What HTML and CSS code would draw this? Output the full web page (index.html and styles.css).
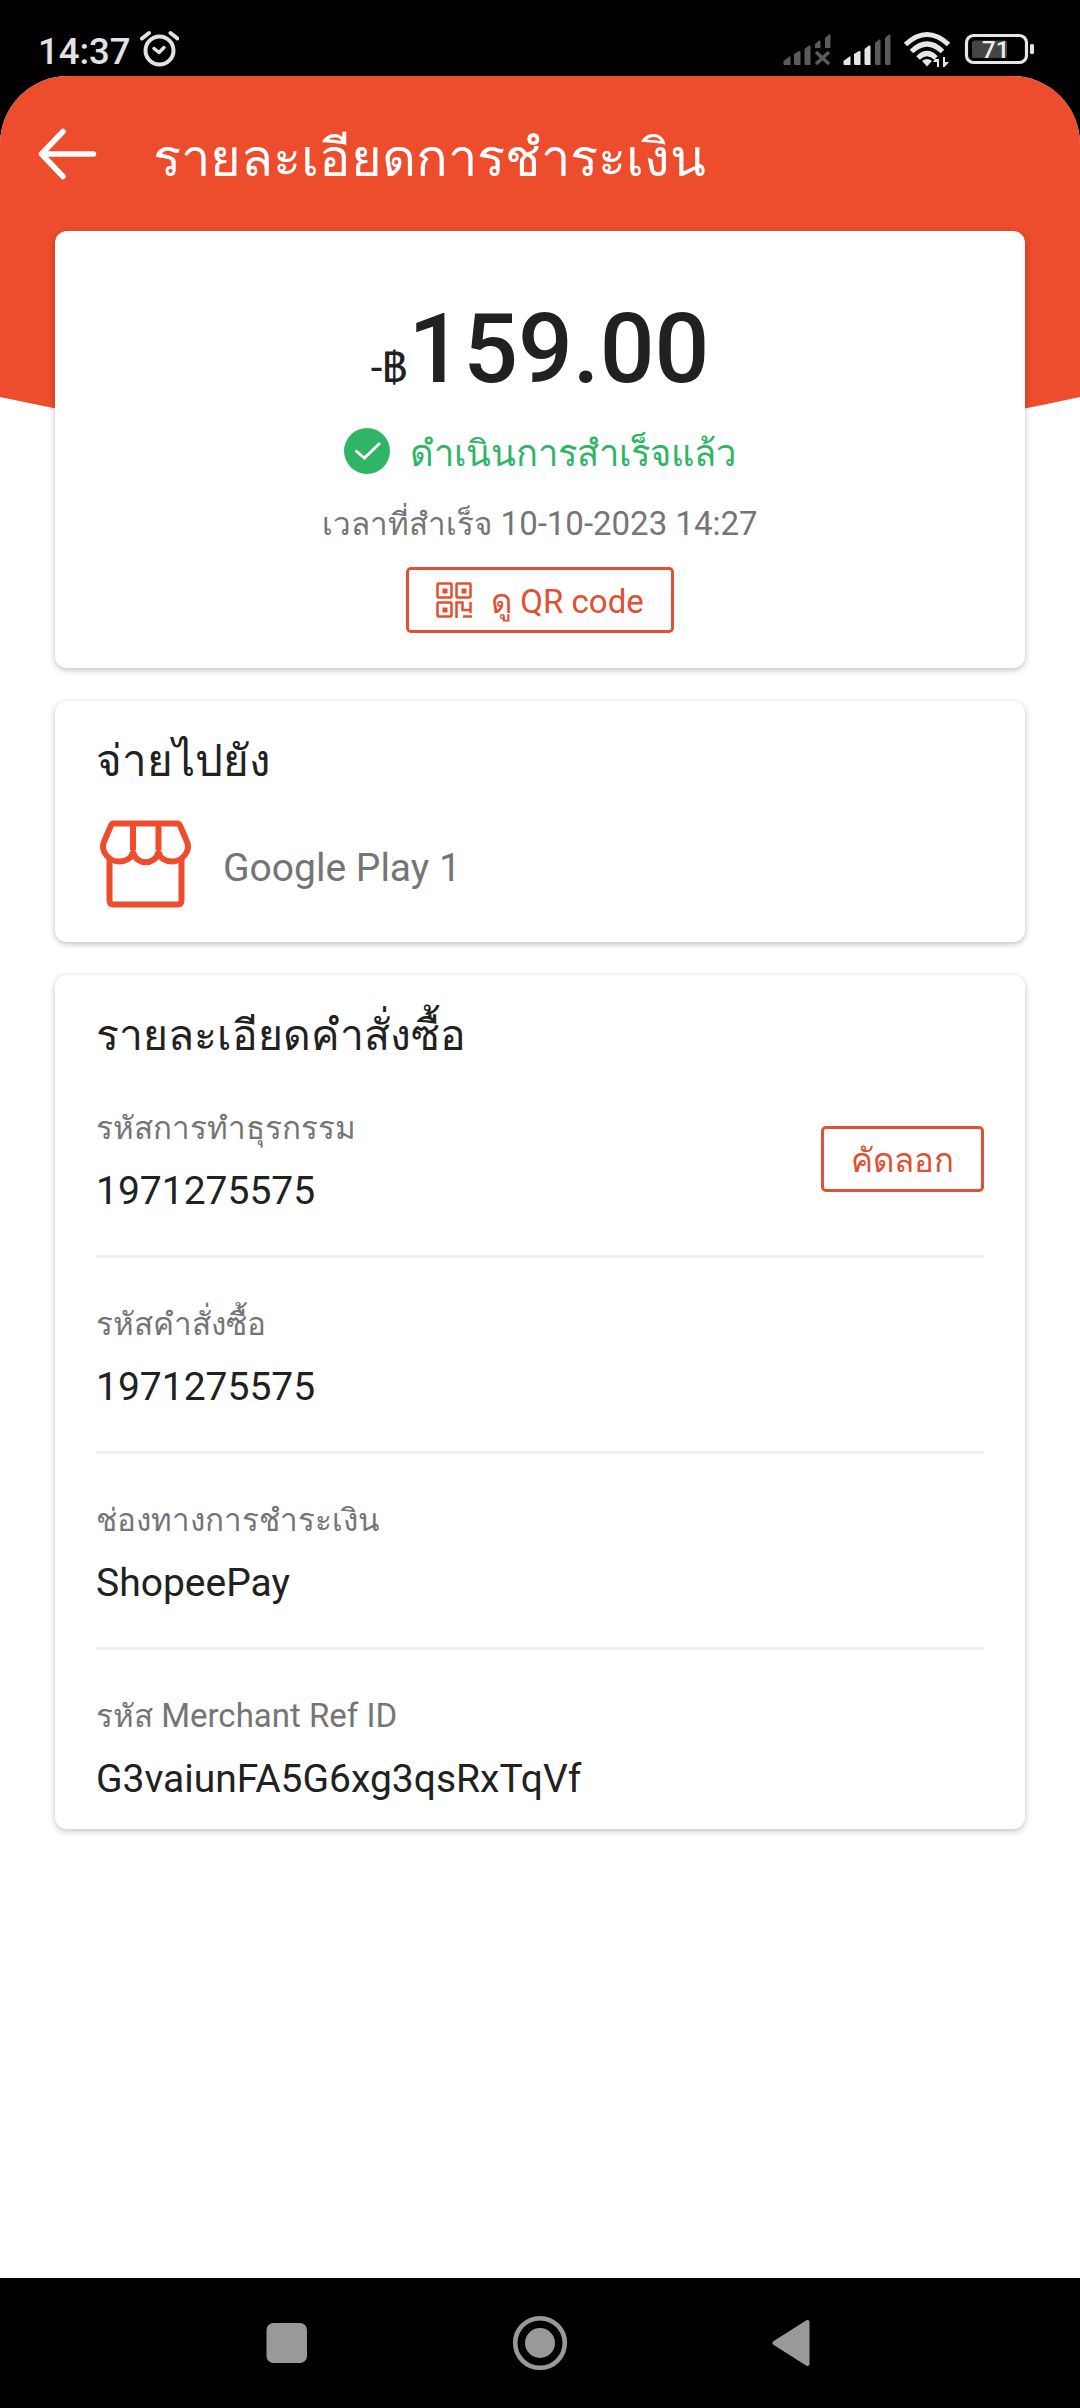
FILE: index.html
```html
<!DOCTYPE html>
<html lang="th">
<head>
<meta charset="utf-8">
<title>รายละเอียดการชำระเงิน</title>
<link rel="stylesheet" href="styles.css">
</head>
<body>
<div class="statusbar">
  <div class="clock">
    <span>14:37</span>
    <svg class="alarm" width="40" height="38" viewBox="138 30 40 38" fill="none" stroke="#e2e2e2" stroke-width="4" stroke-linecap="round" stroke-linejoin="round">
      <circle cx="158.500" cy="50.500" r="14"/><path d="M153 48.500l5 4 5-5" stroke-width="3.500"/><path d="M141 38.500l7-5.500M169.500 33l7 5.500"/>
    </svg>
  </div>
  <svg class="signals" width="252" height="40" viewBox="784 30 252 40">
    <g fill="#5b5b5b">
      <path d="M784.500 61l6-4.500q1-.5 1 .5v8h-6q-1 0-1-1zM795 54l5-3q1.500-.5 1.500 1v13h-5q-1.500 0-1.500-1.500zM805.500 49l4.500-3.500q1.500-.5 1.500 1V65h-4.500q-1.500 0-1.500-1.500zM816 44l4-3.500q1.500-.5 1.500 1V48H816zM826 38l4-3.500q1.500-.5 1.500 1V48H826z"/>
      <path d="M817 52l13 12M830 52l-13 12" stroke="#5b5b5b" stroke-width="3.500"/>
      <path d="M876 43l4-3.500q1.500-.5 1.500 1V65h-4q-1.500 0-1.500-1.500zM886 38l4-3.500q1.500-.5 1.500 1V63.500q0 1.500-1.500 1.500h-2.500q-1.500 0-1.500-1.500z"/>
    </g>
    <g fill="#e6e6e6">
      <path d="M844.500 61l6-4.500q1-.5 1 .5v8h-6q-1 0-1-1zM855 54l5-3q1.500-.5 1.500 1v13h-5q-1.500 0-1.500-1.500zM865.500 49l4.500-3.500q1.500-.5 1.500 1V65h-4.500q-1.500 0-1.500-1.500z"/>
      <path d="M923 61q5-4 10 0l-5 5.500z"/>
      <path d="M936 59h4v8h-2v-5h-4zM944 57h2v5h4l-4.500 5H944z"/>
    </g>
    <g fill="none" stroke="#e6e6e6" stroke-width="5">
      <path d="M906.500 44.500q21.500-20 43 0M912.500 51.500q15.500-15 31 0M919 58q9-9 18 0"/>
    </g>
    <rect x="967.500" y="35.500" width="60" height="27" rx="7" fill="none" stroke="#e6e6e6" stroke-width="3.200"/>
    <rect x="973" y="40.500" width="35" height="17.500" rx="2" fill="#454545"/>
    <rect x="1031" y="44" width="4" height="10" rx="1.500" fill="#e6e6e6"/>
    <text class="battery-level" x="983" y="58">71</text>
  </svg>
</div>

<main class="app">
  <header class="hero">
    <div class="titlebar">
      <svg width="60" height="52" viewBox="0 0 60 52" fill="none" stroke="#fff" stroke-width="5.500" stroke-linecap="round" stroke-linejoin="round"><path d="M55.500 26H4M25 3.500L3.500 26 25 48.500"/></svg>
      <h1>รายละเอียดการชำระเงิน</h1>
    </div>
  </header>

  <section class="card summary">
    <div class="amount"><span class="currency">-฿</span>159.00</div>
    <div class="status">
      <svg width="46" height="46" viewBox="0 0 46 46"><circle cx="23" cy="23" r="23" fill="#30b566"/><path d="M11.500 22.500l9 7.500L36 15" fill="none" stroke="#fff" stroke-width="2.800"/></svg>
      <span class="status-text">ดำเนินการสำเร็จแล้ว</span>
    </div>
    <div class="time"><span class="thai">เวลาที่สำเร็จ</span> 10-10-2023 14:27</div>
    <div class="button qr">
      <svg width="37" height="37" viewBox="0 0 37 37" fill="none" stroke="#e05033" stroke-width="2.500">
        <rect x="1.500" y="1.500" width="14" height="14" rx="1"/><rect x="20.500" y="1.500" width="14" height="14" rx="1"/><rect x="1.500" y="20.500" width="14" height="14" rx="1"/>
        <path d="M20.500 36V20.500h6V28h8v-8M27 34.500h9M34.500 28v3"/>
        <path fill="#e05033" stroke="none" d="M6.500 6.500h5v5h-5zM25.500 6.500h5v5h-5zM6.500 25.500h5v5h-5z"/>
      </svg>
      <span>ดู QR code</span>
    </div>
  </section>

  <section class="card payee">
    <h2>จ่ายไปยัง</h2>
    <div class="merchant">
      <svg width="96" height="96" viewBox="96 815 96 96" fill="none" stroke="#ee4d2d" stroke-width="6" stroke-linejoin="round">
        <path d="M113 823.500h64q2 0 3 2l6.500 15q3 6 0 12c-6 12-24 12-28 0-4 13-21.500 13-25.500 0-4 12-22.500 12-28.500 0q-3-6 0-12l6.500-15q1-2 2-2z"/>
        <path d="M133 824v26M158.500 824v26M109.500 858v42q0 4.500 4 4.500h64q4 0 4-4.500v-42"/>
      </svg>
      <span>Google Play 1</span>
    </div>
  </section>

  <section class="card order">
    <h2>รายละเอียดคำสั่งซื้อ</h2>
    <div class="row">
      <div><div class="label"><span class="thai">รหัสการทำธุรกรรม</span></div><div class="value">1971275575</div></div>
      <div class="button copy"><span>คัดลอก</span></div>
    </div>
    <div class="row"><div><div class="label"><span class="thai">รหัสคำสั่งซื้อ</span></div><div class="value">1971275575</div></div></div>
    <div class="row"><div><div class="label"><span class="thai">ช่องทางการชำระเงิน</span></div><div class="value">ShopeePay</div></div></div>
    <div class="row"><div><div class="label"><span class="thai">รหัส</span> Merchant Ref ID</div><div class="value">G3vaiunFA5G6xg3qsRxTqVf</div></div></div>
  </section>
</main>

<nav class="navbar">
  <svg width="42" height="42" viewBox="0 0 42 42"><rect x=".5" y="1" width="40.500" height="40" rx="7" fill="#999"/></svg>
  <svg width="56" height="56" viewBox="0 0 56 56"><circle cx="28" cy="28" r="24.800" fill="none" stroke="#999" stroke-width="4.600"/><circle cx="28" cy="28" r="15" fill="#999"/></svg>
  <svg width="38" height="46" viewBox="0 0 38 46"><path d="M2.500 23L35.500 2v42z" fill="#999" stroke="#999" stroke-width="4" stroke-linejoin="round"/></svg>
</nav>
</body>
</html>
```

FILE: styles.css
```css
* { box-sizing: border-box; margin: 0; padding: 0; }

body {
  width: 1080px;
  height: 2408px;
  display: flex;
  flex-direction: column;
  background: #000;
  color: #212121;
  font-family: Roboto, sans-serif;
  white-space: nowrap;
  overflow: hidden;
}

svg { display: block; flex: none; }

.statusbar {
  height: 76px;
  padding: 31px 45px 0 38px;
  display: flex;
  justify-content: space-between;
}
.statusbar svg { margin-top: -1px; }
.clock {
  display: flex;
  gap: 8px;
  color: #e2e2e2;
  font-size: 36.500px;
  font-weight: 500;
  line-height: 41px;
}
.battery-level { fill: #eee; font-size: 24px; font-weight: 500; }

.app {
  flex: 1;
  background: #fff;
  border-radius: 68px 68px 0 0;
  overflow: hidden;
}

.hero {
  height: 390px;
  background: #ee4d2d;
  clip-path: path("M0 0H1080V321Q540 440 0 321Z");
}
.titlebar {
  height: 155px;
  padding-left: 38px;
  display: flex;
  align-items: center;
  gap: 55px;
  color: #fff;
}
h1, h2 { font-weight: 400; }
h1 { font-size: 52.500px; line-height: 60px; padding-top: 9px; }

.card {
  margin: 0 55px 33px;
  background: #fff;
  border-radius: 12px;
  box-shadow: 0 2px 6px rgba(0, 0, 0, .25);
}

.summary {
  position: relative;
  height: 437px;
  margin-top: -235px;
  padding-top: 68px;
  display: flex;
  flex-direction: column;
  align-items: center;
}
.amount { height: 100px; font-size: 96.500px; font-weight: 500; line-height: 100px; }
.currency { font-size: 42px; font-weight: 400; line-height: 1; }
.status {
  margin-top: 29px;
  display: flex;
  gap: 20px;
  color: #30b566;
  font-size: 36.300px;
  line-height: 52px;
  height: 46px;
}
.time { margin-top: 30px; color: #757575; font-size: 33px; line-height: 40px; }
.thai { font-size: .952em; line-height: 1; }

.button {
  height: 66px;
  border: 3px solid #e05033;
  border-radius: 5px;
  display: flex;
  align-items: center;
  justify-content: center;
  color: #e05033;
  font-size: 33px;
  line-height: 40px;
}
.button span { padding-top: 3px; }
.qr { width: 268px; margin-top: 23px; gap: 18px; }
.copy { width: 163px; margin-bottom: 6px; }

.payee { height: 241px; padding: 35px 41px 0; }
h2 { font-size: 44px; line-height: 50px; }
.merchant {
  margin-top: 29px;
  display: flex;
  align-items: center;
  gap: 31px;
  color: #757575;
  font-size: 39px;
  line-height: 50px;
}
.merchant span { padding-top: 10px; }

.order { padding: 35px 41px 25px; }
.order h2 { margin-bottom: 2px; font-size: 42.700px; }
.row {
  padding: 46px 0 39px;
  border-bottom: 3px solid #f0f0f0;
  display: flex;
  align-items: center;
  justify-content: space-between;
}
.row:last-child { padding-bottom: 0; border: 0; }
.label { height: 40px; color: #757575; font-size: 33px; line-height: 40px; margin-bottom: 18px; }
.value { font-size: 39px; line-height: 50px; }

.navbar {
  height: 130px;
  padding: 0 270px 0 266px;
  display: flex;
  align-items: center;
  justify-content: space-between;
}
```
